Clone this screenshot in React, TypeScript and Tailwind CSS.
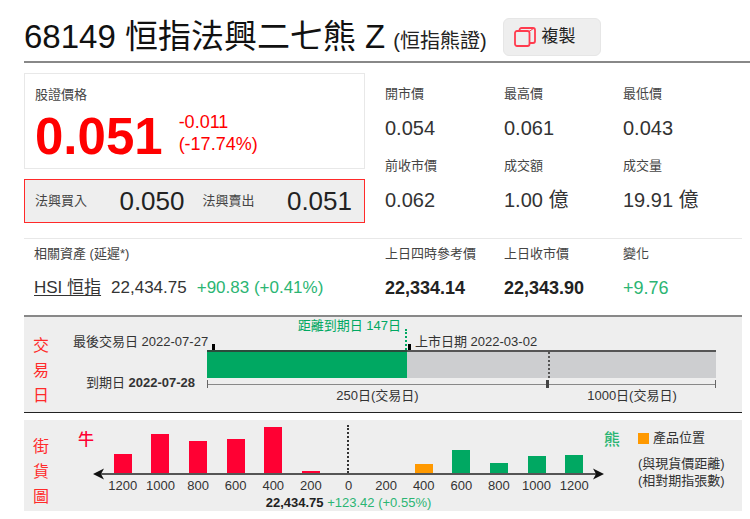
const quotes = [
  { label: '開市價', value: '0.054' },
  { label: '最高價', value: '0.061' },
  { label: '最低價', value: '0.043' },
  { label: '前收市價', value: '0.062' },
  { label: '成交額', value: '1.00 億' },
  { label: '成交量', value: '19.91 億' },
];

const references = [
  { label: '上日四時參考價', value: '22,334.14', style: 'font-bold text-[#222]' },
  { label: '上日收市價', value: '22,343.90', style: 'font-bold text-[#222]' },
  { label: '變化', value: '+9.76', style: 'text-[#2bb573]' },
];

// 街貨分佈 (左: 牛證, 右: 熊證)
const bars = [
  { id: 'bull-1200', distance: 1200, height: 19, color: 'bg-[#ff0033]' },
  { id: 'bull-1000', distance: 1000, height: 39, color: 'bg-[#ff0033]' },
  { id: 'bull-800', distance: 800, height: 32, color: 'bg-[#ff0033]' },
  { id: 'bull-600', distance: 600, height: 34, color: 'bg-[#ff0033]' },
  { id: 'bull-400', distance: 400, height: 46, color: 'bg-[#ff0033]' },
  { id: 'bull-200', distance: 200, height: 2, color: 'bg-[#ff0033]' },
  { id: 'spot', distance: 0, height: 48, color: '' },
  { id: 'bear-200', distance: 200, height: 0, color: 'bg-[#00a862]' },
  { id: 'bear-400', distance: 400, height: 9, color: 'bg-[#ff9900]' },
  { id: 'bear-600', distance: 600, height: 23, color: 'bg-[#00a862]' },
  { id: 'bear-800', distance: 800, height: 10, color: 'bg-[#00a862]' },
  { id: 'bear-1000', distance: 1000, height: 17, color: 'bg-[#00a862]' },
  { id: 'bear-1200', distance: 1200, height: 18, color: 'bg-[#00a862]' },
];

const CopyIcon = () => (
  <svg
    width="22"
    height="20"
    viewBox="0 0 22 20"
    fill="none"
    stroke="#ff3b4e"
    strokeWidth="1.8"
    strokeLinejoin="round"
    aria-hidden="true"
  >
    <rect x="1" y="4" width="14.500" height="15" rx="2" />
    <path d="M5.500 4V3a2 2 0 0 1 2-2H19a2 2 0 0 1 2 2v11a2 2 0 0 1-2 2h-3.500" />
    <path d="M15 4.500l4.500-3" strokeWidth="1" />
  </svg>
);

const SideTitle = ({ text }: { text: string }) => (
  <h2 className="flex w-[34px] shrink-0 flex-col items-center justify-center pt-3 text-base leading-[25px] text-[#ff2a2a]">
    {text.split('').map((char) => (
      <span key={char}>{char}</span>
    ))}
  </h2>
);

const Header = () => (
  <header className="flex h-[63px] items-center border-b-2 border-[#888] pt-3">
    <h1 className="text-[33px] leading-10 text-[#111]">
      68149 恒指法興二七熊 Z
    </h1>
    <span className="ml-2 pt-2 text-xl text-[#222]">(恒指熊證)</span>
    <button className="ml-4 flex h-[38px] w-[98px] items-center gap-1.5 rounded-md border border-[#e6e6e6] bg-[#eee] pl-2.5 text-[17px] text-[#222]">
      <CopyIcon />
      複製
    </button>
  </header>
);

const PricePanel = () => (
  <div>
    <div className="border border-[#e8e8e8] px-2.5 pt-[11px] pb-1.5">
      <div className="text-[13px] leading-5 text-[#444]">股證價格</div>
      <div className="mt-1.5 flex gap-4 text-[#ff0000]">
        <span className="text-[51px] leading-[51px] font-bold">0.051</span>
        <span className="text-lg leading-[22px]">
          -0.011
          <br />
          (-17.74%)
        </span>
      </div>
    </div>
    <div className="mt-2.5 grid h-11 grid-cols-2 items-center gap-[18px] border border-[#ff2a2a] bg-[#eee] pr-3 pl-2.5">
      <div className="flex items-center justify-between">
        <span className="text-[13px] text-[#444]">法興買入</span>
        <span className="text-[26px] text-[#222]">0.050</span>
      </div>
      <div className="flex items-center justify-between">
        <span className="text-[13px] text-[#444]">法興賣出</span>
        <span className="text-[26px] text-[#222]">0.051</span>
      </div>
    </div>
  </div>
);

const Timeline = () => (
  <section className="flex border-t-2 border-b border-t-[#888] border-b-[#222] bg-[#eee] text-[13px] text-[#333]">
    <SideTitle text="交易日" />
    <div className="grid flex-1 grid-cols-[149px_200fr_141fr_168fr] grid-rows-[17px_16px_28px_10px_24px] pr-[26px]">
      <div className="col-span-2 pr-1.5 text-right leading-[17px] text-[#00a862]">
        距離到期日 147日
      </div>
      <div className="col-span-2 col-start-1 row-start-2 flex items-end pl-[15px]">
        <span className="leading-4">最後交易日 2022-07-27</span>
        <span className="ml-1 h-1.5 w-[3px] bg-black" />
        <span className="ml-auto h-[21px] border-r-2 border-dotted border-[#00a862]" />
      </div>
      <div className="col-span-2 col-start-3 row-start-2 flex items-end">
        <span className="ml-px h-1.5 w-[3px] bg-black" />
        <span className="ml-1 leading-4">上市日期 2022-03-02</span>
      </div>
      <div className="col-start-2 row-start-3 border-t-2 border-[#2b4b3c] bg-[#00a862]" />
      <div className="col-start-3 row-start-3 border-t-2 border-[#555] bg-[#cdced0]" />
      <div className="col-start-4 row-start-3 border-t-2 border-[#555] bg-[#cdced0]">
        <div className="h-full border-l-2 border-dotted border-[#555]" />
      </div>
      <div className="col-start-1 row-start-4 pr-3 text-right leading-[10px]">
        到期日 <b>2022-07-28</b>
      </div>
      <div className="col-span-2 col-start-2 row-start-4 flex items-center pt-0.5">
        <span className="h-2 w-px bg-[#666]" />
        <span className="h-px flex-1 bg-[#888]" />
        <span className="h-2 w-0.5 bg-[#444]" />
      </div>
      <div className="col-start-4 row-start-4 flex items-center pt-0.5">
        <span className="h-2 w-px bg-[#444]" />
        <span className="h-px flex-1 bg-[#888]" />
        <span className="h-2 w-px bg-[#666]" />
      </div>
      <div className="col-span-2 col-start-2 row-start-5 text-center leading-4">
        250日(交易日)
      </div>
      <div className="col-start-4 row-start-5 text-center leading-4">
        1000日(交易日)
      </div>
    </div>
  </section>
);

const Distribution = () => (
  <section className="mt-[7px] flex bg-[#eee] text-[13px] text-[#333]">
    <SideTitle text="街貨圖" />
    <div className="w-[35px] shrink-0 pt-2 pl-5 text-base font-medium text-[#ff0033]">
      牛
    </div>
    <div className="flex-1">
      <div className="grid h-[53px] grid-cols-13 items-end justify-items-center px-[11px]">
        {bars.map((bar) =>
          bar.distance === 0 ? (
            <div
              key={bar.id}
              className="h-12 border-l-2 border-dotted border-[#333]"
            />
          ) : (
            <div
              key={bar.id}
              className={`w-[18px] ${bar.color}`}
              style={{ height: bar.height }}
            />
          )
        )}
      </div>
      <div className="-my-[5px] flex items-center">
        <svg width="12" height="12" viewBox="0 0 12 12" aria-hidden="true">
          <path d="M0 6L11 0.500L8 6L11 11.500Z" fill="#111" />
        </svg>
        <span className="-mx-1 h-0.5 flex-1 bg-[#555]" />
        <svg width="12" height="12" viewBox="0 0 12 12" aria-hidden="true">
          <path d="M12 6L1 0.500L4 6L1 11.500Z" fill="#111" />
        </svg>
      </div>
      <div className="mt-[3px] grid grid-cols-13 px-[11px] leading-4">
        {bars.map((bar) => (
          <span key={bar.id} className="text-center">
            {bar.distance}
          </span>
        ))}
      </div>
      <div className="text-center leading-[17px]">
        <b className="text-[#222]">22,434.75</b>{' '}
        <span className="text-[#2bb573]">+123.42 (+0.55%)</span>
      </div>
    </div>
    <div className="w-[34px] shrink-0 pt-2 text-base font-medium text-[#2bb573]">
      熊
    </div>
    <div className="w-[104px] shrink-0 pt-[9px]">
      <div className="flex items-center gap-1 leading-[18px]">
        <span className="size-[11px] bg-[#ff9900]" />
        產品位置
      </div>
      <div className="mt-2 leading-[17px]">
        (與現貨價距離)
        <br />
        (相對期指張數)
      </div>
    </div>
  </section>
);

const App = () => {
  return (
    <main className="bg-white pb-2 pl-6 font-['Liberation_Sans','Noto_Sans_CJK_TC',sans-serif]">
      <Header />
      <div className="pr-2">
        <div className="grid grid-cols-[341fr_357fr] gap-5 border-b border-[#e8e8e8] pt-2.5 pb-[15px]">
          <PricePanel />
          <dl className="grid grid-cols-3 content-start gap-y-3 pt-[11px]">
            {quotes.map(({ label, value }) => (
              <div key={label}>
                <dt className="text-[13px] leading-5 text-[#444]">{label}</dt>
                <dd className="mt-2 text-xl leading-8 text-[#333]">{value}</dd>
              </div>
            ))}
          </dl>
        </div>

        <div className="grid grid-cols-[341fr_357fr] gap-5 pt-[5px] pb-3.5">
          <div className="pl-2.5">
            <div className="text-[13px] leading-5 text-[#444]">
              相關資產 (延遲*)
            </div>
            <div className="mt-[11px] flex items-center gap-2.5 text-[17px] leading-[26px] text-[#333]">
              <a href="#hsi" className="underline underline-offset-2">
                HSI 恒指
              </a>
              <span>22,434.75</span>
              <span className="text-[#2bb573]">+90.83 (+0.41%)</span>
            </div>
          </div>
          <dl className="grid grid-cols-3">
            {references.map(({ label, value, style }) => (
              <div key={label}>
                <dt className="text-[13px] leading-5 whitespace-nowrap text-[#444]">
                  {label}
                </dt>
                <dd className={`mt-[11px] text-lg leading-[26px] ${style}`}>
                  {value}
                </dd>
              </div>
            ))}
          </dl>
        </div>

        <Timeline />
        <Distribution />
      </div>
    </main>
  );
};

export default App;
